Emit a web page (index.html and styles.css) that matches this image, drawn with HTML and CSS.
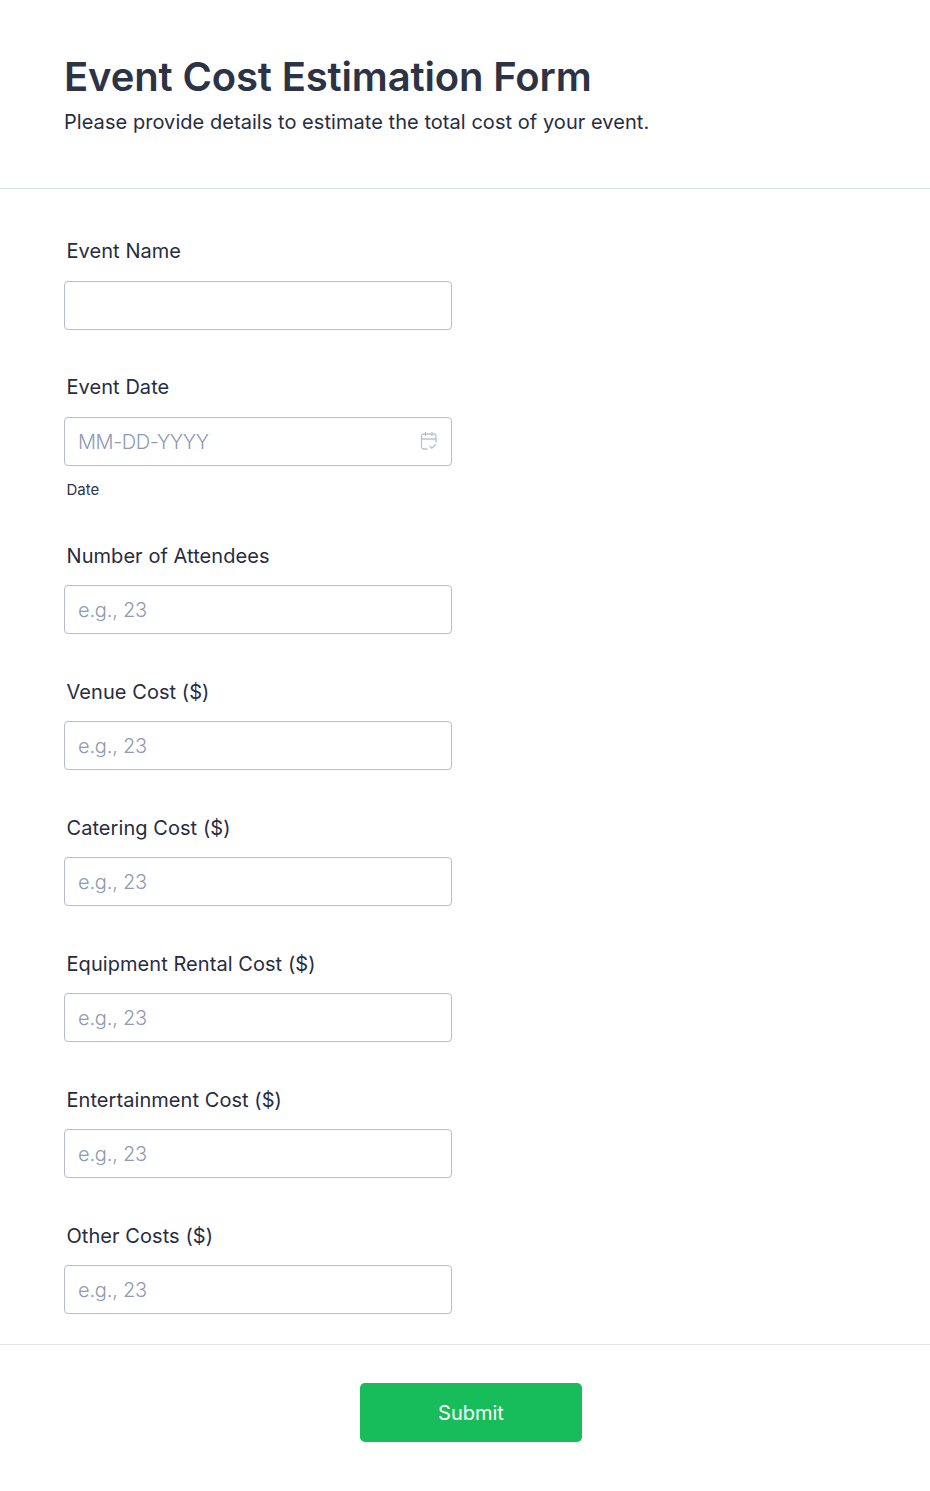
FILE: index.html
```html
<!DOCTYPE html>
<html lang="en">
<head>
<meta charset="utf-8">
<title>Event Cost Estimation Form</title>
<link rel="stylesheet" href="styles.css">
</head>
<body>
<form class="form">
  <header class="header">
    <h1 class="title">Event Cost Estimation Form</h1>
    <p class="subtitle">Please provide details to estimate the total cost of your event.</p>
  </header>
  <div class="fields">
    <div class="field">
      <label class="label">Event Name</label>
      <input class="input" type="text">
    </div>
    <div class="field field-date">
      <label class="label">Event Date</label>
      <div class="date-wrap">
        <input class="input input-date" type="text" placeholder="MM-DD-YYYY">
        <svg class="cal" width="18" height="20" viewBox="0 0 18 20" fill="none" stroke="#bcc1cc" stroke-width="1.3" stroke-linecap="round" stroke-linejoin="round">
          <path d="M7 18H3.5A2 2 0 0 1 1.5 16V5A2 2 0 0 1 3.5 3H14A2 2 0 0 1 16 5V11"/>
          <path d="M1.5 8H16M5.5 1.5V4.5M12 1.5V4.5"/>
          <path d="M10 15.5L11.8 17.3L15.5 13.5"/>
        </svg>
      </div>
      <span class="sublabel">Date</span>
    </div>
    <div class="field">
      <label class="label">Number of Attendees</label>
      <input class="input" type="text" placeholder="e.g., 23">
    </div>
    <div class="field">
      <label class="label">Venue Cost ($)</label>
      <input class="input" type="text" placeholder="e.g., 23">
    </div>
    <div class="field">
      <label class="label">Catering Cost ($)</label>
      <input class="input" type="text" placeholder="e.g., 23">
    </div>
    <div class="field">
      <label class="label">Equipment Rental Cost ($)</label>
      <input class="input" type="text" placeholder="e.g., 23">
    </div>
    <div class="field">
      <label class="label">Entertainment Cost ($)</label>
      <input class="input" type="text" placeholder="e.g., 23">
    </div>
    <div class="field">
      <label class="label">Other Costs ($)</label>
      <input class="input" type="text" placeholder="e.g., 23">
    </div>
  </div>
  <div class="footer">
    <button class="submit" type="button">Submit</button>
  </div>
</form>
</body>
</html>
```
FILE: styles.css
```css
* {
  box-sizing: border-box;
}
html, body {
  margin: 0;
  padding: 0;
  background: #fff;
}
body {
  font-family: Inter, "Liberation Sans", sans-serif;
  color: #2c3345;
}
.form {
  width: 930px;
  height: 1491px;
}
.header {
  height: 189px;
  padding: 52px 64px 0;
  border-bottom: 1px solid #d8dde7;
}
.title {
  margin: 0;
  font-size: 40px;
  line-height: 50px;
  font-weight: 600;
  letter-spacing: -0.15px;
}
.subtitle {
  margin: 5px 0 0;
  font-size: 20px;
  line-height: 30px;
  font-weight: 400;
  letter-spacing: 0.05px;
  color: #272d40;
}
.fields {
  padding-top: 49px;
  display: flex;
  flex-direction: column;
  gap: 44px;
}
.field {
  display: flex;
  flex-direction: column;
  align-items: flex-start;
  padding-left: 64px;
}
.label {
  display: block;
  padding-left: 2.5px;
  font-size: 20px;
  line-height: 26px;
  font-weight: 400;
  letter-spacing: 0.06px;
  margin-bottom: 17px;
  color: #272d40;
}
.field-date ~ .field .label {
  padding-top: 1px;
  margin-bottom: 16px;
}
.input {
  display: block;
  width: 388px;
  height: 49px;
  padding: 0 13px;
  border: 1px solid #b8bdc9;
  border-radius: 4px;
  background: #fff;
  font-family: inherit;
  font-size: 20px;
  color: #2c3345;
  outline: none;
}
.input::placeholder {
  color: #8c9ab5;
  opacity: 1;
  font-weight: 300;
  letter-spacing: -0.2px;
}
.input-date::placeholder {
  letter-spacing: -0.4px;
}
.date-wrap {
  position: relative;
}
.cal {
  position: absolute;
  top: 14px;
  right: 14px;
}
.sublabel {
  padding-left: 2.5px;
  margin-top: 14px;
  font-size: 15px;
  line-height: 20px;
  margin-bottom: -2px;
}
.footer {
  margin-top: 30px;
  border-top: 1px solid #e3e5ec;
  padding: 38px 0 0 360px;
}
.submit {
  display: block;
  width: 222px;
  height: 59px;
  border: 0;
  border-radius: 5px;
  background: #18bd5b;
  color: #fff;
  font-family: inherit;
  font-size: 20px;
  font-weight: 400;
}
```
